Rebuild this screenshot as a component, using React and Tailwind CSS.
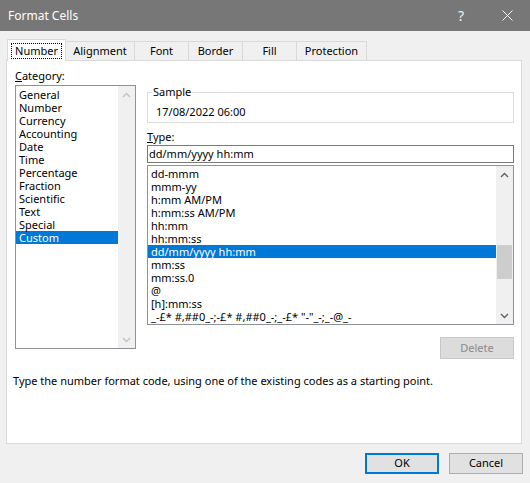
import React from "react";

const categories = [
  "General",
  "Number",
  "Currency",
  "Accounting",
  "Date",
  "Time",
  "Percentage",
  "Fraction",
  "Scientific",
  "Text",
  "Special",
  "Custom",
];

const types = [
  "dd-mmm",
  "mmm-yy",
  "h:mm AM/PM",
  "h:mm:ss AM/PM",
  "hh:mm",
  "hh:mm:ss",
  "dd/mm/yyyy hh:mm",
  "mm:ss",
  "mm:ss.0",
  "@",
  "[h]:mm:ss",
  '_-£* #,##0_-;-£* #,##0_-;_-£* "-"_-;_-@_-',
];

const tabs = ["Alignment", "Font", "Border", "Fill", "Protection"];
const tabWidths = ["w-[69px]", "w-[54px]", "w-[54px]", "w-[54px]", "w-[70px]"];

const Chevron = ({ down, color }) => (
  <svg width="9" height="6" viewBox="0 0 9 6">
    <polyline
      points={down ? "1,1 4.5,4.5 8,1" : "1,5 4.5,1.5 8,5"}
      fill="none"
      stroke={color}
      strokeWidth="1.4"
    />
  </svg>
);

const ScrollBar = ({ thumb, color }) => (
  <div className="flex w-[17px] flex-col bg-[#f0f0f0]">
    <div className="flex h-[17px] items-center justify-center">
      <Chevron color={color} />
    </div>
    <div className="flex-1">
      {thumb && <div className="mx-auto mt-[62px] h-[34px] w-[15px] bg-[#cdcdcd]" />}
    </div>
    <div className="flex h-[17px] items-center justify-center">
      <Chevron down color={color} />
    </div>
  </div>
);

export default function App() {
  return (
    <div className="h-[483px] w-[530px] overflow-hidden bg-[#f0f0f0] font-['Noto_Sans',sans-serif] text-[11px] text-black">
      {/* title bar */}
      <div className="flex h-[31px] items-center bg-[#777777] text-[12px] text-white">
        <span className="pl-[8px]">Format Cells</span>
        <span className="ml-auto w-[46px] text-center text-[14px] text-[#f2f2f2]">?</span>
        <span className="flex w-[46px] justify-center">
          <svg width="11" height="11" viewBox="0 0 11 11">
            <path d="M0.5 0.5 L10.5 10.5 M10.5 0.5 L0.5 10.5" stroke="#f4f4f4" strokeWidth="1" />
          </svg>
        </span>
      </div>

      {/* tabs */}
      <div className="mt-[8px] flex h-[21px] items-start pl-[7px]">
        <div className="relative z-10 flex h-[22px] w-[59px] items-start justify-center border-x border-t border-[#d9d9d9] bg-white pt-[3px]">
          <span className="border border-dotted border-black px-[3px] leading-[14px]">Number</span>
        </div>
        {tabs.map((t, i) => (
          <div
            key={t}
            className={`mt-[2px] flex h-[19px] items-center justify-center border-r border-t border-[#d9d9d9] bg-[#f0f0f0] ${tabWidths[i]}`}
          >
            {t}
          </div>
        ))}
      </div>

      {/* panel */}
      <div className="ml-[6px] flex h-[384px] w-[516px] flex-col border border-[#d9d9d9] bg-white">
        <div className="flex gap-[11px] pl-[8px]">
          {/* category */}
          <div className="flex w-[121px] flex-col pt-[7px]">
            <div className="h-[17px] leading-[16px]">
              <span className="underline">C</span>ategory:
            </div>
            <div className="flex h-[264px] border border-[#8f9399]">
              <div className="flex-1 pt-[2px]">
                {categories.map((c) => (
                  <div
                    key={c}
                    className={`pl-[3px] leading-[13px] ${c === "Custom" ? "bg-[#0078d7] text-white" : ""}`}
                  >
                    {c}
                  </div>
                ))}
              </div>
              <ScrollBar color="#c2c2c2" />
            </div>
          </div>

          {/* right side */}
          <div className="flex w-[367px] flex-col pt-[31px]">
            <div className="flex h-[31px] flex-col border border-[#dcdcdc]">
              <span className="-mt-[8px] ml-[4px] self-start bg-white px-[1px] leading-[14px]">Sample</span>
              <span className="ml-[8px] mt-[6px] leading-[14px]">17/08/2022 06:00</span>
            </div>
            <div className="mt-[7px] leading-[14px]">
              <span className="underline">T</span>ype:
            </div>
            <div className="mt-[1px] flex h-[18px] items-center border border-[#7a7a7a] pl-[1px]">
              dd/mm/yyyy hh:mm
            </div>
            <div className="mt-[2px] flex h-[160px] border border-[#8f9399]">
              <div className="flex-1 overflow-hidden pt-[1px]">
                {types.map((t) => (
                  <div
                    key={t}
                    className={`whitespace-pre pl-[3px] leading-[13px] ${t === "dd/mm/yyyy hh:mm" ? "bg-[#0078d7] text-white" : ""}`}
                  >
                    {t}
                  </div>
                ))}
              </div>
              <ScrollBar thumb color="#606060" />
            </div>
            <div className="mt-[12px] flex h-[22px] w-[74px] items-center justify-center self-end border border-[#c8c8c8] bg-[#dcdcdc] text-[#8a8a8a]">
              Delete
            </div>
          </div>
        </div>

        <div className="mt-[14px] pl-[6px] leading-[16px]">
          Type the number format code, using one of the existing codes as a starting point.
        </div>
      </div>

      {/* buttons */}
      <div className="mt-[9px] flex justify-end gap-[10px] pr-[7px]">
        <div className="flex h-[21px] w-[74px] items-center justify-center border-2 border-[#0078d7] bg-[#e1e1e1]">
          OK
        </div>
        <div className="flex h-[21px] w-[74px] items-center justify-center border border-[#adadad] bg-[#e1e1e1]">
          Cancel
        </div>
      </div>
    </div>
  );
}
